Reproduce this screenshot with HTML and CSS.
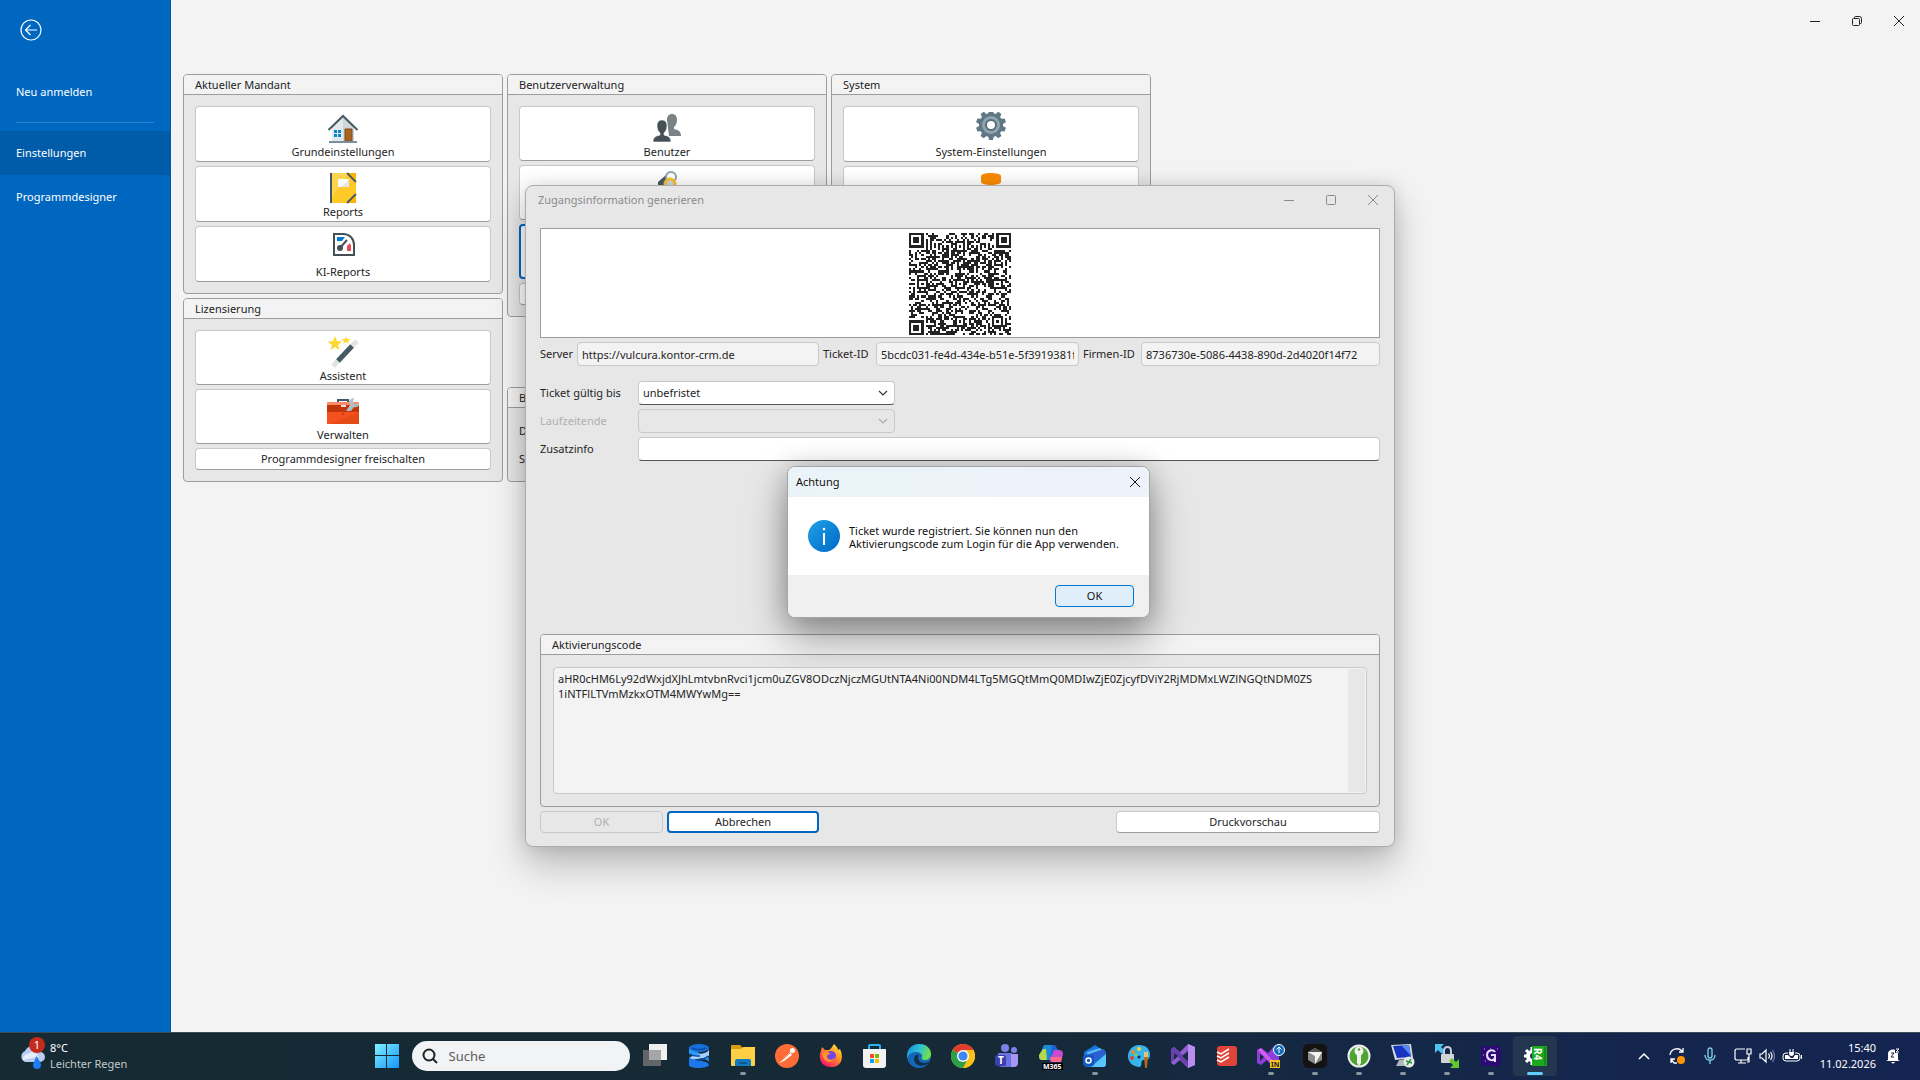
FILE: index.html
```html
<!DOCTYPE html>
<html lang="de">
<head>
<meta charset="utf-8">
<meta name="viewport" content="width=device-width, initial-scale=1">
<title>Zugangsinformation generieren</title>
<link rel="stylesheet" href="styles.css">
</head>
<body>
<div class="app">
  <aside class="sidebar">
    <button class="back" aria-label="Zurück">
      <svg width="22" height="22" viewBox="0 0 22 22" fill="none" stroke="#fff" stroke-width="1.2"><circle cx="11" cy="11" r="10"/><path d="M17 11H5.500M10.500 6l-5 5 5 5"/></svg>
    </button>
    <nav class="menu">
      <a href="#anmelden">Neu anmelden</a>
      <hr>
      <a href="#einstellungen" class="active">Einstellungen</a>
      <a href="#designer">Programmdesigner</a>
    </nav>
  </aside>

  <main class="content">
    <div class="window-controls">
      <button aria-label="Minimieren"><svg width="12" height="12" viewBox="0 0 12 12" stroke="#222" fill="none"><path d="M1 6.500h10"/></svg></button>
      <button aria-label="Wiederherstellen"><svg width="12" height="12" viewBox="0 0 12 12" stroke="#222" fill="none"><rect x="1.500" y="3.500" width="7" height="7" rx="1"/><path d="M3.500 3V2.500a1 1 0 0 1 1-1h4a2 2 0 0 1 2 2v4a1 1 0 0 1-1 1H9"/></svg></button>
      <button aria-label="Schließen"><svg width="12" height="12" viewBox="0 0 12 12" stroke="#222" fill="none"><path d="M1 1l10 10M11 1L1 11"/></svg></button>
    </div>

    <div class="columns">
      <div class="column">
        <section class="group">
          <h2>Aktueller Mandant</h2>
          <div class="group-body">
            <button class="tile">
              <svg width="32" height="32" viewBox="0 0 32 32"><path d="M5 15L16 5l11 10v15H5z" fill="#e4e8eb"/><path d="M16 5l11 10v15H16z" fill="#cfd6da"/><path d="M1.500 18L16 4l14.500 14" fill="none" stroke="#455a64" stroke-width="2"/><path d="M7 18h3v3H7zM11 18h3v3h-3zM7 22h3v3H7zM11 22h3v3h-3z" fill="#0288d1"/><path d="M18 17h7v12h-7z" fill="#a86420" stroke="#7b4a16"/><path d="M2 29h28v2H2z" fill="#78909c"/></svg>
              <span>Grundeinstellungen</span></button>
            <button class="tile">
              <svg width="32" height="32" viewBox="0 0 32 32"><path d="M3 1h26v30H3z" fill="#ffca28"/><path d="M5 1h17L5 25z" fill="#ffd54f"/><path d="M3 1h2v30H3z" fill="#455a64"/><path d="M22 1h7v7zM22 31h7v-7z" fill="#ffb300"/><path d="M20 1l9 9M20 31l9-9" stroke="#455a64" stroke-width="1.800"/><path d="M11 7h11v8H11z" fill="#fafafa"/><path d="M22 8v7H14z" fill="#e6e6e6"/></svg>
              <span>Reports</span></button>
            <button class="tile">
              <svg width="32" height="32" viewBox="0 0 32 32"><path d="M7 2h9c7 0 11 5 11 11v10H7z" fill="#fff" stroke="#455056" stroke-width="2"/><path d="M10 5h8l-3 4h-5z" fill="#0078d4"/><path d="M20 14l3-3 1 3v5h-4z" fill="#e74856"/><path d="M12 17l8-9" stroke="#455056" stroke-width="2"/><circle cx="13" cy="16" r="3" fill="#455056"/></svg>
              <span>KI-Reports</span></button>
          </div>
        </section>
        <section class="group">
          <h2>Lizensierung</h2>
          <div class="group-body compact">
            <button class="tile">
              <svg width="32" height="32" viewBox="0 0 32 32"><path d="M8 0l2 5 5 .5-4 3.500 1.500 5L8 11l-4.500 3L5 9 .5 5.500 6 5z" fill="#fdd835"/><path d="M19 0l1 3h4l-3 2 1 3-3-2-3 2 1-3-3-2h4z" fill="#fdd835"/><path d="M6 30L30 5" stroke="#dfe4e7" stroke-width="5"/><path d="M11 25L25 10" stroke="#455a64" stroke-width="5"/></svg>
              <span>Assistent</span></button>
            <button class="tile">
              <svg width="32" height="32" viewBox="0 0 32 32"><path d="M11 7V5h10v2" fill="none" stroke="#455a64" stroke-width="2"/><path d="M0 7h32v22H0z" fill="#f4511e"/><path d="M32 17v12H4z" fill="#e64a19"/><path d="M0 7h32v3H0z" fill="#ff8a65"/><path d="M0 10h32v7H0z" fill="#bf360c"/><circle cx="16" cy="19" r="1" fill="#bf360c"/><path d="M14 10h5v2h-5z" fill="#e0e0e0"/><path d="M19 16l4-6-1-4 2-2 3-1-1 4 3 3 3-3c1 4-2 6-5 5l-3 4z" fill="#b0bec5"/></svg>
              <span>Verwalten</span></button>
            <button class="tile flat">Programmdesigner freischalten</button>
          </div>
        </section>
      </div>

      <div class="column">
        <section class="group">
          <h2>Benutzerverwaltung</h2>
          <div class="group-body compact">
            <button class="tile">
              <svg width="32" height="32" viewBox="0 0 32 32"><path d="M16 8c0-4 2-6 5-6s5 2 5 6c0 3-1 5-3 7v2c4 1 7 2 7 7H18z" fill="#7a8286"/><path d="M6 14c0-4 2-6 5-6s5 2 5 6c0 3-1 5-3 7v2c4 1 7 2 7 7H2c0-5 3-6 7-7v-2c-2-2-3-4-3-7z" fill="#455056" stroke="#fff" stroke-width=".6"/></svg>
              <span>Benutzer</span></button>
            <button class="tile">
              <svg width="32" height="32" viewBox="0 0 32 32"><path d="M7 11l8-7v15l-8-5z" fill="#455a64"/><circle cx="20" cy="6" r="5" fill="none" stroke="#90a4ae" stroke-width="2"/><circle cx="19" cy="13" r="5" fill="#cfd8dc" stroke="#fbc02d" stroke-width="3"/></svg>
              <span></span></button>
            <button class="tile focused" aria-label="Zugang"></button>
            <button class="tile flat" aria-label="Verwaltung"></button>
          </div>
        </section>
        <section class="group">
          <h2>B</h2>
          <div class="group-body lines"><span>D</span><span>S</span></div>
        </section>
      </div>

      <div class="column">
        <section class="group">
          <h2>System</h2>
          <div class="group-body">
            <button class="tile">
              <svg width="32" height="32" viewBox="0 0 32 32"><g fill="#5f7885"><circle cx="16" cy="13" r="12"/><path d="M13 3l1-5h4l1 5zM13 23l1 5h4l1-5z"/><path d="M13 3l1-5h4l1 5zM13 23l1 5h4l1-5z" transform="rotate(36 16 13)"/><path d="M13 3l1-5h4l1 5zM13 23l1 5h4l1-5z" transform="rotate(72 16 13)"/><path d="M13 3l1-5h4l1 5zM13 23l1 5h4l1-5z" transform="rotate(108 16 13)"/><path d="M13 3l1-5h4l1 5zM13 23l1 5h4l1-5z" transform="rotate(144 16 13)"/></g><circle cx="16" cy="13" r="9" fill="#90a4ae"/><circle cx="16" cy="13" r="5" fill="#fff" stroke="#546e7a" stroke-width="2"/></svg>
              <span>System-Einstellungen</span></button>
            <button class="tile">
              <svg width="32" height="32" viewBox="0 0 32 32"><path d="M6 4c0-4 20-4 20 0v6c0 4-20 4-20 0z" fill="#fb8c00"/><path d="M6 13c0 4 20 4 20 0v8c0 4-20 4-20 0z" fill="#fb8c00"/></svg>
              <span></span></button>
          </div>
        </section>
      </div>
    </div>
  </main>

  <section class="dialog" role="dialog" aria-labelledby="dialog-title">
    <header class="dialog-head">
      <h1 id="dialog-title">Zugangsinformation generieren</h1>
      <div class="dialog-controls">
        <button aria-label="Minimieren"><svg width="12" height="12" viewBox="0 0 12 12" stroke="#8a8a8a" fill="none"><path d="M1 6.500h10"/></svg></button>
        <button aria-label="Maximieren"><svg width="12" height="12" viewBox="0 0 12 12" stroke="#8a8a8a" fill="none"><rect x="1.500" y="1.500" width="9" height="9" rx="1"/></svg></button>
        <button aria-label="Schließen"><svg width="12" height="12" viewBox="0 0 12 12" stroke="#8a8a8a" fill="none"><path d="M1 1l10 10M11 1L1 11"/></svg></button>
      </div>
    </header>
    <div class="qr-box"><svg id="qr" width="102" height="102" viewBox="0 0 49 49" shape-rendering="crispEdges" role="img" aria-label="QR-Code"></svg></div>
    <div class="ids">
      <label for="server">Server</label><input id="server" readonly value="https://vulcura.kontor-crm.de">
      <label for="ticket">Ticket-ID</label><input id="ticket" readonly value="5bcdc031-fe4d-434e-b51e-5f3919381f02">
      <label for="firma">Firmen-ID</label><input id="firma" readonly value="8736730e-5086-4438-890d-2d4020f14f72">
    </div>
    <div class="form">
      <label for="gueltig">Ticket gültig bis</label>
      <div class="combo"><select id="gueltig"><option>unbefristet</option></select><svg width="10" height="6" viewBox="0 0 10 6" fill="none" stroke="#333" stroke-width="1.200"><path d="M1 1l4 4 4-4"/></svg></div>
      <label for="laufzeit" class="off">Laufzeitende</label>
      <div class="combo"><select id="laufzeit" disabled><option></option></select><svg width="10" height="6" viewBox="0 0 10 6" fill="none" stroke="#aaa" stroke-width="1.200"><path d="M1 1l4 4 4-4"/></svg></div>
      <label for="zusatz">Zusatzinfo</label>
      <input id="zusatz" class="editable">
    </div>
    <section class="group code-group">
      <h2><label for="code">Aktivierungscode</label></h2>
      <div class="code-body">
        <div class="code-field">
          <textarea id="code" readonly>aHR0cHM6Ly92dWxjdXJhLmtvbnRvci1jcm0uZGV8ODczNjczMGUtNTA4Ni00NDM4LTg5MGQtMmQ0MDIwZjE0ZjcyfDViY2RjMDMxLWZlNGQtNDM0ZS
1iNTFlLTVmMzkxOTM4MWYwMg==</textarea>
          <div class="track"></div>
        </div>
      </div>
    </section>
    <footer class="dialog-foot">
      <button class="btn ok" disabled>OK</button>
      <button class="btn cancel">Abbrechen</button>
      <button class="btn preview">Druckvorschau</button>
    </footer>

    <section class="message" role="alertdialog" aria-labelledby="message-title">
      <header><h2 id="message-title">Achtung</h2><button aria-label="Schließen"><svg width="12" height="12" viewBox="0 0 12 12" stroke="#111" fill="none"><path d="M1 1l10 10M11 1L1 11"/></svg></button></header>
      <div class="message-body">
        <svg width="32" height="32" viewBox="0 0 32 32"><defs><linearGradient id="info" x1="0" y1="0" x2="1" y2="1"><stop offset="0" stop-color="#1fa2e6"/><stop offset="1" stop-color="#0067c8"/></linearGradient></defs><circle cx="16" cy="16" r="16" fill="url(#info)"/><path d="M16 13v12" stroke="#fff" stroke-width="2"/><circle cx="16" cy="9" r="1.300" fill="#fff"/></svg>
        <p>Ticket wurde registriert. Sie können nun den<br>Aktivierungscode zum Login für die App verwenden.</p>
      </div>
      <footer><button>OK</button></footer>
    </section>
  </section>
</div>

<footer class="taskbar">
  <div class="weather">
    <div class="weather-icon">
      <svg width="26" height="28" viewBox="0 0 26 28"><path d="M6 20a6 6 0 0 1 0-11 8 8 0 0 1 15 1 5 5 0 0 1 0 10z" fill="#b9cdf2"/><path d="M4 18a5 5 0 0 1 5-6 6 6 0 0 1 10 3z" fill="#e6eefc"/><path d="M17 14c4 5 5 7 5 9a4 4 0 0 1-8 0c0-2 2-4 3-9z" fill="#1e7df0"/></svg>
      <span class="badge">1</span>
    </div>
    <div class="weather-text"><span>8°C</span><span class="dim">Leichter Regen</span></div>
  </div>

  <div class="dock">
    <button class="start" aria-label="Start"><svg width="24" height="24" viewBox="0 0 24 24"><defs><linearGradient id="win" x1="0" y1="0" x2="1" y2="1"><stop offset="0" stop-color="#83efff"/><stop offset="1" stop-color="#1296fb"/></linearGradient></defs><path d="M0 0h11v11H0zM12 0h12v11H12zM0 12h11v12H0zM12 12h12v12H12z" fill="url(#win)"/></svg></button>
    <label class="search"><svg width="16" height="16" viewBox="0 0 16 16" fill="none" stroke="#222" stroke-width="2"><circle cx="7" cy="7" r="5.500"/><path d="M11 11l4 4"/></svg><input type="text" placeholder="Suche" aria-label="Suche"></label>
    <div class="apps">
      <button aria-label="Aktive Anwendungen"><svg width="24" height="24" viewBox="0 0 24 24"><path d="M0 6h18v16H0z" fill="#626466"/><path d="M6 0h18v16H6z" fill="#efefef"/><path d="M6 6h12v10H6z" fill="#a5a6a7"/></svg></button>
      <button aria-label="Bibliothek"><svg width="24" height="24" viewBox="0 0 24 24"><path d="M2 3v6c0 4 20 5 20 9 0-7-2-7-10-9z" fill="#2f9bf8"/><path d="M22 5v6c0 4-20 3-20 8v-4c0-5 20-4 20-10z" fill="#a6d0ff"/><path d="M2 13c2 4 20 3 20 8-1 4-20 4-20 0z" fill="#1c78ea"/><ellipse cx="12" cy="4" rx="10" ry="4" fill="#1671df"/><path d="M5 4c4 2 10 2 14 0M3 10c4 3 8 2 10 2M10 16c4 0 8-1 11-4" fill="none" stroke="#0b4ba8" stroke-width="1.500"/></svg></button>
      <button class="open" aria-label="Explorer"><svg width="24" height="24" viewBox="0 0 24 24"><path d="M0 2q0-1 1-1h8l2 2v4H0z" fill="#d99a0b"/><path d="M0 5h10l2-2h12v18q0 1-1 1H1q-1 0-1-1z" fill="#ffd045"/><path d="M4 22v-5q0-2 2-2h12q2 0 2 2v5z" fill="#1179bd"/><path d="M8 18h8v2H8z" fill="#0c5a91"/></svg></button>
      <button aria-label="Postman"><svg width="24" height="24" viewBox="0 0 24 24"><circle cx="12" cy="12" r="12" fill="#ff6c37"/><path d="M4 19l11-11 2 3-8 6z" fill="#fff"/><circle cx="17.500" cy="6.500" r="2.500" fill="#fff"/><path d="M6 17l9-8" stroke="#ff6c37"/></svg></button>
      <button aria-label="Firefox"><svg width="24" height="24" viewBox="0 0 24 24"><defs><linearGradient id="fox" x1="1" y1="0" x2=".3" y2="1"><stop offset="0" stop-color="#fff44f"/><stop offset=".45" stop-color="#ff9a1f"/><stop offset="1" stop-color="#f5156c"/></linearGradient></defs><path d="M1 10l2-7 3 3 4 0c2-1 3-3 5-6 3 3 4 4 4 6l2-1c4 8 2 18-9 18C3 23 0 16 1 10z" fill="url(#fox)"/><circle cx="12" cy="12" r="5" fill="#7542e5"/><path d="M3 9c4-2 6-1 9 1-3 0-4 1-4 3 2 4 6 3 8 0-1 6-10 7-12 0z" fill="#ff9228"/></svg></button>
      <button aria-label="Store"><svg width="24" height="24" viewBox="0 0 24 24"><path d="M6 6V2q0-1 1-1h9q1 0 1 1v4" fill="none" stroke="#28b4f0" stroke-width="2"/><path d="M0 5h23v16q0 3-3 3H3q-3 0-3-3z" fill="#f2f2f2"/><path d="M7 10h4v4H7z" fill="#f25022"/><path d="M12 10h4v4h-4z" fill="#7fba00"/><path d="M7 15h4v4H7z" fill="#00a4ef"/><path d="M12 15h4v4h-4z" fill="#ffb900"/></svg></button>
      <button aria-label="Edge"><svg width="24" height="24" viewBox="0 0 24 24"><defs><linearGradient id="edge" x1="0" y1="0" x2="1" y2=".3"><stop offset="0" stop-color="#1787d6"/><stop offset=".55" stop-color="#2fc0d8"/><stop offset="1" stop-color="#6be04f"/></linearGradient></defs><circle cx="12" cy="12" r="12" fill="#1568b8"/><path d="M0 12C0 5 5 0 12 0c8 0 12 5 12 10 0 4-3 6-6 6-3 0-4-1-3-3 1-3-2-5-6-5-5 0-8 3-9 7z" fill="url(#edge)"/><path d="M12 11c-2 3 0 8 5 8 3 0 4-1 6-2-5 8-16 5-16-2 0-3 2-5 5-4z" fill="#122f4c"/></svg></button>
      <button aria-label="Chrome"><svg width="24" height="24" viewBox="0 0 24 24"><circle cx="12" cy="12" r="12" fill="#fbc116"/><path d="M12 12L1.600 6A12 12 0 0 1 22.400 6z" fill="#e33b2e"/><path d="M12 12h0L1.600 6A12 12 0 0 0 12 24l5-9z" fill="#2aa04a"/><path d="M12 6h10.400A12 12 0 0 1 12 24l5-9z" fill="#fbc116"/><circle cx="12" cy="12" r="6" fill="#fff"/><circle cx="12" cy="12" r="4.600" fill="#4285f4"/></svg></button>
      <button aria-label="Teams"><svg width="24" height="24" viewBox="0 0 24 24"><circle cx="10" cy="4" r="4" fill="#7b83eb"/><circle cx="19" cy="6" r="3" fill="#7b83eb"/><path d="M3 9h14v14H7q-4 0-4-4z" fill="#6a73df"/><path d="M16 10h7v9q0 4-4 4h-3z" fill="#a895f5"/><rect y="11" width="11" height="11" rx="2" fill="#3940ab"/><text class="mark" x="3" y="20">T</text></svg></button>
      <button class="m365" aria-label="Microsoft 365"><svg width="24" height="24" viewBox="0 0 24 24"><path d="M5 1h10q2 0 1 3l-4 12H3q-4 0-3-4z" fill="#188bd8"/><path d="M0 11l4-6h3L8 16H2q-2-1-2-5z" fill="#b6d84a"/><path d="M14 6h6q4 0 4 4l-2 8h-9q-3 0-2-3z" fill="#c64bd0"/><path d="M13 1h3l3 5h-4l-4 9z" fill="#1f5fd0"/><path d="M11 13h12l-1 5h-9z" fill="#ff6a8a"/></svg><span>M365</span></button>
      <button class="open" aria-label="Outlook"><svg width="24" height="24" viewBox="0 0 24 24"><path d="M1 8L12 1l11 7v12q0 3-3 3H4q-3 0-3-3z" fill="#1577dc"/><path d="M4 8l13-4 3 3L5 15z" fill="#5bb8f8"/><path d="M3 11l18-6 2 4-13 11z" fill="#2a5fd0"/><path d="M23 10v10q0 3-3 3H8z" fill="#58c5ff"/><rect y="11" width="11" height="11" rx="2" fill="#1457c0"/><circle cx="5.500" cy="16.500" r="2.500" fill="none" stroke="#fff" stroke-width="1.500"/></svg></button>
      <button aria-label="Paint"><svg width="24" height="24" viewBox="0 0 24 24"><path d="M12 1c7 0 11 4 11 10 0 5-4 5-7 5-3 1 0 7-4 7C5 22 1 18 1 12 1 6 6 1 12 1z" fill="#35b5ea"/><circle cx="6" cy="8" r="2" fill="#ef8c22"/><circle cx="12" cy="5" r="2" fill="#ffd02f"/><circle cx="5" cy="14" r="2" fill="#d9413b"/><circle cx="9" cy="11" r="1.500" fill="#8bd448"/><circle cx="12" cy="13" r="1.500" fill="#12334f"/><path d="M17 8h4v7h-4z" fill="#e8c07a"/><path d="M17 13h4l-1 11h-2z" fill="#b4671e"/></svg></button>
      <button aria-label="Visual Studio"><svg width="24" height="24" viewBox="0 0 24 24"><path d="M17 0l7 3v18l-7 3-8-8-6 5-3-2V5l3-2 6 5z" fill="#8e5fd0"/><path d="M0 5l3-2 15 14v7L3 9v7l-3 3z" fill="#6a3fae"/><path d="M17 0l7 3v18l-7 3z" fill="#ba8cf0"/><path d="M3 9l4 3-4 4zM17 7v10l-6-5z" fill="#162a40"/></svg></button>
      <button aria-label="Todoist"><svg width="24" height="24" viewBox="0 0 24 24"><rect x="2" y="2" width="20" height="20" rx="3" fill="#e04438"/><path d="M2 8l4 2 8-5M2 12l4 2 8-5M2 16l4 2 8-5" fill="none" stroke="#fff" stroke-width="1.500"/></svg></button>
      <button class="open" aria-label="Visual Studio Insiders"><svg width="28" height="24" viewBox="0 0 28 24"><path d="M0 6l4-2 7 5 7-8 4 3v17l-5 3-7-8-6 5-4-2z" fill="#8b3fd8"/><path d="M1 6l3-2 16 17-3 2z" fill="#d45cf0"/><path d="M3 10l4 3-4 4z" fill="#162a40"/><circle cx="22" cy="6" r="5.500" fill="#0f6cbd" stroke="#fff"/><path d="M22 9V3M19.500 5.500L22 3l2.500 2.500" fill="none" stroke="#fff"/><path d="M13 16h10v8H13z" fill="#fbbf24"/><text class="mark dark" x="14" y="23">IN</text></svg></button>
      <button class="open" aria-label="Cursor"><svg width="24" height="24" viewBox="0 0 24 24"><rect width="24" height="24" rx="5" fill="#15130f"/><path d="M12 4l7 4v8l-7 4-7-4V8z" fill="#8a8a88"/><path d="M5 8h14l-7 12v-8z" fill="#f2f2f0"/><path d="M12 4l7 4H5z" fill="#555"/></svg></button>
      <button class="open" aria-label="KeePassXC"><svg width="24" height="24" viewBox="0 0 24 24"><circle cx="12" cy="12" r="10.500" fill="#4ba52f" stroke="#eee" stroke-width="2"/><circle cx="12" cy="7" r="4.500" fill="#f1f1f1"/><path d="M10 9h4v10l-2 3-2-3z" fill="#f1f1f1"/><circle cx="12" cy="5.500" r="1.200" fill="#4ba52f"/></svg></button>
      <button class="open" aria-label="Remotedesktop"><svg width="24" height="24" viewBox="0 0 24 24"><path d="M0 1l20-1 2 14-18 2z" fill="#d2d7dc"/><path d="M2 2l16-1 2 12-14 1z" fill="#1734c0"/><path d="M10 1l8 0 2 11z" fill="#5887ee"/><path d="M8 16l8-1v4l4 3H5z" fill="#aeb5bc"/><circle cx="18" cy="18" r="5.500" fill="#e8e8e8"/><path d="M15 17l3 1-2 3M21 19l-3-1 2-3" fill="none" stroke="#27943c" stroke-width="1.500"/></svg></button>
      <button class="open" aria-label="WinSCP"><svg width="24" height="24" viewBox="0 0 24 24"><path d="M0 0h9L6 3l4 4-3 3-4-4-3 3z" fill="#4cc4f0"/><path d="M9 11V7q0-4 3.500-4T16 7v4" fill="none" stroke="#c8cbd0" stroke-width="2"/><rect x="6" y="10" width="13" height="9" rx="1" fill="#d2d5d8"/><path d="M24 24h-9l3-3-4-4 3-3 4 4 3-3z" fill="#62c72f"/></svg></button>
      <button class="open" aria-label="Git Client"><svg width="24" height="24" viewBox="0 0 24 24"><rect x="2" y="2" width="20" height="20" rx="3" fill="#2d0a72"/><path d="M16 8c-2-3-8-2-8 3s6 7 8 3v-3h-4M16 14v4" fill="none" stroke="#e9dcff" stroke-width="2"/><path d="M5 5h1M18 5h1M4 11h1M6 17h1M11 5h1" stroke="#c9a9ff"/></svg></button>
      <button class="open current" aria-label="R4"><svg width="24" height="24" viewBox="0 0 24 24"><path d="M9 3v18M1 12h8M3 6l6 6-6 6" fill="none" stroke="#fff" stroke-width="3"/><circle cx="9" cy="12" r="6" fill="#fff"/><circle cx="10" cy="12" r="3" fill="#24364f"/><path d="M9 2h15v20H9z" fill="#19a81e"/><path d="M21 3h2v18h-2z" fill="#0f8a14"/><text class="mark" x="4" y="-11" transform="rotate(90)">R4</text></svg></button>
    </div>
  </div>

  <div class="tray">
    <svg width="12" height="8" viewBox="0 0 12 8" fill="none" stroke="#fff" stroke-width="1.500"><path d="M1 7l5-5 5 5"/></svg>
    <svg width="18" height="18" viewBox="0 0 18 18" fill="none" stroke="#fff" stroke-width="1.300"><path d="M2 8a7 7 0 0 1 12-4l1 1M15 1v4h-4M3 16v-4h4M3 12l3 4h3"/><circle cx="13" cy="13" r="4" fill="#ff9500" stroke="none"/></svg>
    <svg width="12" height="18" viewBox="0 0 12 18" fill="none" stroke="#7fd6ee" stroke-width="1.300"><rect x="4" y="1" width="4" height="10" rx="2"/><path d="M1 8c0 7 10 7 10 0M6 13v4"/></svg>
    <div class="status">
      <svg width="18" height="18" viewBox="0 0 18 18" fill="none" stroke="#fff" stroke-width="1.200"><path d="M11 2H3Q1 2 1 4v7q0 2 2 2h11v-3M7 13v3M4 16h8M13 2h4v5h-4zM15 7v8h-2"/></svg>
      <svg width="16" height="16" viewBox="0 0 16 16" fill="none" stroke="#fff" stroke-width="1.200"><path d="M1 6h2l4-4v12l-4-4H1zM9.500 5.500q2 2.500 0 5M11.500 4q3 4 0 8"/><path d="M13.500 2q4 6 0 12" stroke="#72809a"/></svg>
      <svg width="20" height="16" viewBox="0 0 20 16" fill="none" stroke="#fff"><path d="M6 5H4Q1 5 1 8v2q0 3 3 3h11q3 0 3-3V8q0-3-3-3h-2M19.500 7v4"/><path d="M3 7h3l3 3h2l2-3h3v4H3z" fill="#fff" stroke="none"/><path d="M7 4h5v1q0 3-2.500 3T7 5z" fill="#fff" stroke="none"/><path d="M8 1v3M11 1v3"/></svg>
    </div>
    <div class="clock"><span>15:40</span><span>11.02.2026</span></div>
    <svg width="14" height="16" viewBox="0 0 14 16"><path d="M2 12V6c0-6 10-6 10 0v6l2 1H0z" fill="#fff"/><path d="M5 14h4q-2 3-4 0z" fill="#fff"/><path d="M5 5h3l-3 4h3" fill="none" stroke="#142452"/><path d="M9 0h5v5H9z" fill="#142452"/><path d="M10 1h3l-3 3h3" fill="none" stroke="#fff"/></svg>
  </div>
</footer>
<script src="qr.js"></script>
</body>
</html>
```
FILE: styles.css
```css
* { box-sizing: border-box; }

body {
  margin: 0;
  height: 100vh;
  display: flex;
  flex-direction: column;
  overflow: hidden;
  background: #f3f3f3;
  color: #242424;
  font: 11px/16px "Noto Sans", "Open Sans", sans-serif;
}

button, input, select, textarea { font: inherit; color: inherit; }
button { padding: 0; border: 0; background: none; }
h1, h2, p { margin: 0; font-size: 11px; font-weight: 400; }
svg { display: block; flex: none; }

.app { flex: 1; min-height: 0; display: flex; position: relative; }

/* Sidebar */
.sidebar {
  width: 171px;
  flex: none;
  background: #0067c0;
  border-right: 1px solid #005aa6;
  color: #fff;
}
.back { display: block; margin: 19px 0 29px 20px; }
.menu a {
  display: block;
  height: 44px;
  padding: 0 16px;
  line-height: 44px;
  color: #fff;
  text-decoration: none;
}
.menu .active { background: #005ba8; }
.menu hr { margin: 8px 16px; border: 0; border-top: 1px solid #2b80cb; }

/* Settings page */
.content { flex: 1; min-width: 0; }
.window-controls { display: flex; justify-content: flex-end; height: 42px; }
.window-controls button, .dialog-controls button { width: 42px; display: grid; place-items: center; }
.columns { display: flex; gap: 4px; padding: 32px 12px 0; }
.column { width: 320px; display: flex; flex-direction: column; justify-content: space-between; gap: 4px; }
.group { border: 1px solid #9d9d9d; border-radius: 4px; background: #e7e7e7; }
.group h2 {
  height: 20px;
  padding: 0 11px;
  line-height: 19px;
  background: #f3f3f3;
  border-bottom: 1px solid #9d9d9d;
  border-radius: 3px 3px 0 0;
}
.group-body { display: flex; flex-direction: column; gap: 4px; padding: 11px; }
.lines { height: 73px; gap: 12px; padding-top: 15px; }
.tile, .btn {
  border: 1px solid #c9c9c9;
  border-bottom-color: #9d9d9d;
  border-radius: 4px;
  background: #fff;
}
.tile { height: 56px; display: flex; flex-direction: column; align-items: center; padding-top: 5px; }
.compact .tile { height: 55px; }
.tile.flat, .compact .flat { height: 22px; padding: 0; justify-content: center; }
.tile.focused { border: 2px solid #0067c0; }

/* Ticket dialog */
.dialog {
  position: absolute;
  inset: 0;
  margin: auto;
  width: 870px;
  height: 662px;
  display: flex;
  flex-direction: column;
  padding: 0 14px;
  background: #e7e7e7;
  border: 1px solid #acacac;
  border-radius: 8px;
  box-shadow: 0 18px 36px rgba(0, 0, 0, .24), 0 0 16px rgba(0, 0, 0, .12);
}
.dialog-head { display: flex; justify-content: space-between; height: 42px; color: #8b8b8b; }
.dialog-head h1 { padding-top: 6px; margin-left: -2px; }
.dialog-controls { display: flex; height: 28px; margin-right: -14px; }
.qr-box { display: grid; place-items: center; height: 110px; padding-top: 2px; background: #fff; border: 1px solid #9d9d9d; }
#qr path { fill: #222; }
.ids { display: grid; grid-template-columns: 33px 242px 49px 203px 54px 1fr; column-gap: 4px; align-items: center; margin-top: 4px; white-space: nowrap; }
.ids input, .form input, .combo select {
  width: 100%;
  min-width: 0;
  height: 24px;
  padding: 0 4px;
  border: 1px solid #c9c9c9;
  border-radius: 4px;
  background: #f3f3f3;
  outline: 0;
}
.form { display: grid; grid-template-columns: 94px 1fr; gap: 4px; align-items: center; margin-top: 15px; }
.form .editable, .combo select { background: #fff; border-bottom-color: #555; }
.form .off { color: #b0b0b0; }
.combo { display: grid; width: 257px; align-items: center; }
.combo select, .combo svg { grid-area: 1 / 1; }
.combo select { appearance: none; }
.combo select:disabled { background: #e7e7e7; border-color: #c9c9c9; opacity: 1; }
.combo svg { justify-self: end; margin-right: 7px; pointer-events: none; }
.code-group { margin-top: auto; }
.code-body { padding: 12px; }
.code-field { display: flex; height: 127px; padding: 1px; border: 1px solid #c9c9c9; border-radius: 4px; background: #f3f3f3; }
.code-field textarea {
  flex: 1;
  padding: 2px 0 0 3px;
  border: 0;
  outline: 0;
  resize: none;
  overflow: hidden;
  background: none;
  line-height: 15px;
  word-break: break-all;
}
.track { width: 17px; background: #e7e7e7; }
.dialog-foot { display: flex; gap: 4px; margin: 4px 0 13px; }
.btn { height: 22px; }
.btn.ok { width: 123px; background: #e7e7e7; border-color: #c9c9c9; color: #b0b0b0; }
.btn.cancel { width: 152px; border: 2px solid #0067c0; }
.btn.preview { width: 264px; margin-left: auto; }

/* Message box over the dialog */
.message {
  position: absolute;
  left: 261px;
  top: 280px;
  width: 363px;
  color: #111;
  background: #fff;
  border: 1px solid #a5a5a5;
  border-radius: 8px;
  overflow: hidden;
  box-shadow: 0 20px 40px rgba(0, 0, 0, .36), 0 0 24px rgba(0, 0, 0, .18);
}
.message header { display: flex; justify-content: space-between; align-items: center; height: 30px; padding: 0 8px; background: linear-gradient(90deg, #eaf4f8, #eef2fa); }
.message-body { display: flex; gap: 9px; height: 78px; padding: 23px 20px 0; }
.message-body p { line-height: 13px; margin-top: 4px; white-space: nowrap; }
.message footer { display: flex; justify-content: flex-end; padding: 10px 15px; background: #f0f0f0; }
.message footer button { width: 79px; height: 22px; border: 1px solid #0078d4; border-radius: 4px; background: #e0eef9; }

/* Taskbar */
.taskbar {
  flex: none;
  display: flex;
  height: 48px;
  padding-bottom: 2px;
  color: #fff;
  background: linear-gradient(90deg, #152a33, #152a36 50%, #14274a 78%, #142452);
  border-top: 1px solid #3b4c57;
}
.weather, .tray { flex: 1; display: flex; align-items: center; }
.weather { gap: 5px; padding-left: 19px; }
.weather-icon { position: relative; }
.badge {
  position: absolute;
  left: 10px;
  top: -5px;
  width: 16px;
  height: 16px;
  border-radius: 8px;
  background: #c42b1c;
  text-align: center;
}
.weather-text, .clock { display: flex; flex-direction: column; }
.dim { color: #c5cacd; }
.dock { display: flex; align-items: center; margin-left: 12px; }
.start { margin-right: 13px; }
.search {
  display: flex;
  align-items: center;
  gap: 11px;
  width: 218px;
  height: 30px;
  padding: 0 10px;
  border-radius: 15px;
  background: #f2f3f4;
}
.search input { flex: 1; min-width: 0; border: 0; padding: 0; outline: 0; background: none; font-size: 13px; }
.search input::placeholder { color: #5c5c5c; opacity: 1; }
.apps { display: flex; margin-left: 3px; }
.apps button { position: relative; width: 44px; height: 40px; display: grid; place-items: center; }
.apps .open::after {
  content: "";
  position: absolute;
  left: 19px;
  bottom: 1px;
  width: 6px;
  height: 3px;
  border-radius: 2px;
  background: #8b959f;
}
.apps .current { border-radius: 4px; background: #24364f; }
.apps .current::after { left: 14px; width: 16px; background: #60cdff; }
.mark { font-size: 10px; font-weight: 700; fill: #fff; }
.mark.dark { font-size: 7px; fill: #222; }
.m365 span {
  position: absolute;
  right: 10px;
  bottom: 6px;
  padding: 0 1px;
  background: #000;
  font-size: 7px;
  line-height: 7px;
  font-weight: 700;
}
.tray { justify-content: flex-end; gap: 18px; padding-right: 20px; }
.status { display: flex; align-items: center; gap: 7px; }
.clock { text-align: right; }
.clock + svg { margin-left: -8px; }
```
FILE: qr.js
```js
// Draws the activation code as a QR symbol (version 8, level M, byte mode).
(function () {
  const SIZE = 49, EC = 22, BLOCKS = [38, 38, 39, 39], CENTERS = [6, 24, 42];
  const text = document.getElementById('code').value.replace(/\s/g, '');

  const exp = [], log = [];
  for (let i = 0, x = 1; i < 255; i++) {
    exp[i] = x; log[x] = i;
    x <<= 1; if (x & 256) x ^= 285;
  }
  const mul = (a, b) => a && b ? exp[(log[a] + log[b]) % 255] : 0;

  let gen = [1];
  for (let i = 0; i < EC; i++) {
    const next = new Array(gen.length + 1).fill(0);
    gen.forEach((g, j) => { next[j] ^= g; next[j + 1] ^= mul(g, exp[i]); });
    gen = next;
  }
  function remainder(data) {
    const r = data.concat(new Array(EC).fill(0));
    for (let i = 0; i < data.length; i++) {
      const f = r[i];
      gen.forEach((g, j) => { r[i + j] ^= mul(g, f); });
    }
    return r.slice(data.length);
  }

  let bits = '0100' + text.length.toString(2).padStart(8, '0');
  for (const c of text) bits += c.charCodeAt(0).toString(2).padStart(8, '0');
  bits += '0000';
  bits = bits.padEnd(Math.ceil(bits.length / 8) * 8, '0');
  const data = bits.match(/.{8}/g).map(b => parseInt(b, 2));
  for (let pad = 236; data.length < 154; pad ^= 236 ^ 17) data.push(pad);

  let at = 0;
  const parts = BLOCKS.map(n => data.slice(at, at += n));
  const ecs = parts.map(remainder);
  const words = [];
  for (let i = 0; i < 39; i++) parts.forEach(p => { if (i < p.length) words.push(p[i]); });
  for (let i = 0; i < EC; i++) ecs.forEach(p => words.push(p[i]));

  const grid = Array.from({ length: SIZE }, () => new Array(SIZE).fill(0));
  const fixed = Array.from({ length: SIZE }, () => new Array(SIZE).fill(false));
  const set = (r, c, v) => { grid[r][c] = v ? 1 : 0; fixed[r][c] = true; };

  for (let i = 0; i < SIZE; i++) { set(6, i, i % 2 === 0); set(i, 6, i % 2 === 0); }
  [[3, 3], [3, SIZE - 4], [SIZE - 4, 3]].forEach(([r, c]) => {
    for (let y = -4; y <= 4; y++) for (let x = -4; x <= 4; x++) {
      const d = Math.max(Math.abs(x), Math.abs(y));
      if (r + y >= 0 && r + y < SIZE && c + x >= 0 && c + x < SIZE) set(r + y, c + x, d !== 2 && d !== 4);
    }
  });
  CENTERS.forEach(r => CENTERS.forEach(c => {
    if ((r === 6 && c !== 24) || (c === 6 && r !== 24)) return;
    for (let y = -2; y <= 2; y++) for (let x = -2; x <= 2; x++) set(r + y, c + x, Math.max(Math.abs(x), Math.abs(y)) !== 1);
  }));
  const version = 0x085BC;
  for (let i = 0; i < 18; i++) {
    const v = version >> i & 1, a = SIZE - 11 + i % 3, b = Math.floor(i / 3);
    set(a, b, v); set(b, a, v);
  }
  function format(mask) {
    let r = mask;
    for (let i = 0; i < 10; i++) r = (r << 1) ^ ((r >> 9) * 0x537);
    const f = (mask << 10 | r) ^ 0x5412, bit = i => f >> i & 1;
    for (let i = 0; i < 6; i++) set(i, 8, bit(i));
    set(7, 8, bit(6)); set(8, 8, bit(7)); set(8, 7, bit(8));
    for (let i = 9; i < 15; i++) set(8, 14 - i, bit(i));
    for (let i = 0; i < 8; i++) set(8, SIZE - 1 - i, bit(i));
    for (let i = 8; i < 15; i++) set(SIZE - 15 + i, 8, bit(i));
    set(SIZE - 8, 8, 1);
  }
  format(0);

  let n = 0;
  for (let right = SIZE - 1; right >= 1; right -= 2) {
    if (right === 6) right = 5;
    for (let v = 0; v < SIZE; v++) for (let j = 0; j < 2; j++) {
      const c = right - j, r = ((right + 1) & 2) === 0 ? SIZE - 1 - v : v;
      if (!fixed[r][c] && n < words.length * 8) { grid[r][c] = words[n >> 3] >> (7 - (n & 7)) & 1; n++; }
    }
  }

  const masks = [
    (r, c) => (r + c) % 2, (r, c) => r % 2, (r, c) => c % 3, (r, c) => (r + c) % 3,
    (r, c) => (Math.floor(r / 2) + Math.floor(c / 3)) % 2, (r, c) => r * c % 2 + r * c % 3,
    (r, c) => (r * c % 2 + r * c % 3) % 2, (r, c) => ((r + c) % 2 + r * c % 3) % 2
  ];
  const toggle = m => {
    for (let r = 0; r < SIZE; r++) for (let c = 0; c < SIZE; c++) if (!fixed[r][c] && !masks[m](r, c)) grid[r][c] ^= 1;
  };
  function penalty() {
    let p = 0, dark = 0;
    const cols = grid[0].map((_, c) => grid.map(row => row[c]));
    grid.concat(cols).forEach(line => {
      const s = line.join('');
      (s.match(/0{5,}|1{5,}/g) || []).forEach(m => { p += m.length - 2; });
      for (let i = 0; i + 11 <= SIZE; i++) {
        const w = s.substr(i, 11);
        if (w === '10111010000' || w === '00001011101') p += 40;
      }
    });
    for (let r = 0; r < SIZE; r++) for (let c = 0; c < SIZE; c++) {
      dark += grid[r][c];
      if (r && c && grid[r][c] === grid[r - 1][c] && grid[r][c] === grid[r][c - 1] && grid[r][c] === grid[r - 1][c - 1]) p += 3;
    }
    return p + Math.floor(Math.abs(dark * 20 / (SIZE * SIZE) - 10)) * 10;
  }
  let best = 0, low = Infinity;
  for (let m = 0; m < 8; m++) {
    toggle(m); format(m);
    const p = penalty();
    if (p < low) { low = p; best = m; }
    toggle(m);
  }
  toggle(best); format(best);

  let d = '';
  grid.forEach((row, r) => row.forEach((v, c) => { if (v) d += 'M' + c + ' ' + r + 'h1v1h-1z'; }));
  const path = document.createElementNS('http://www.w3.org/2000/svg', 'path');
  path.setAttribute('d', d);
  document.getElementById('qr').appendChild(path);
})();
```
